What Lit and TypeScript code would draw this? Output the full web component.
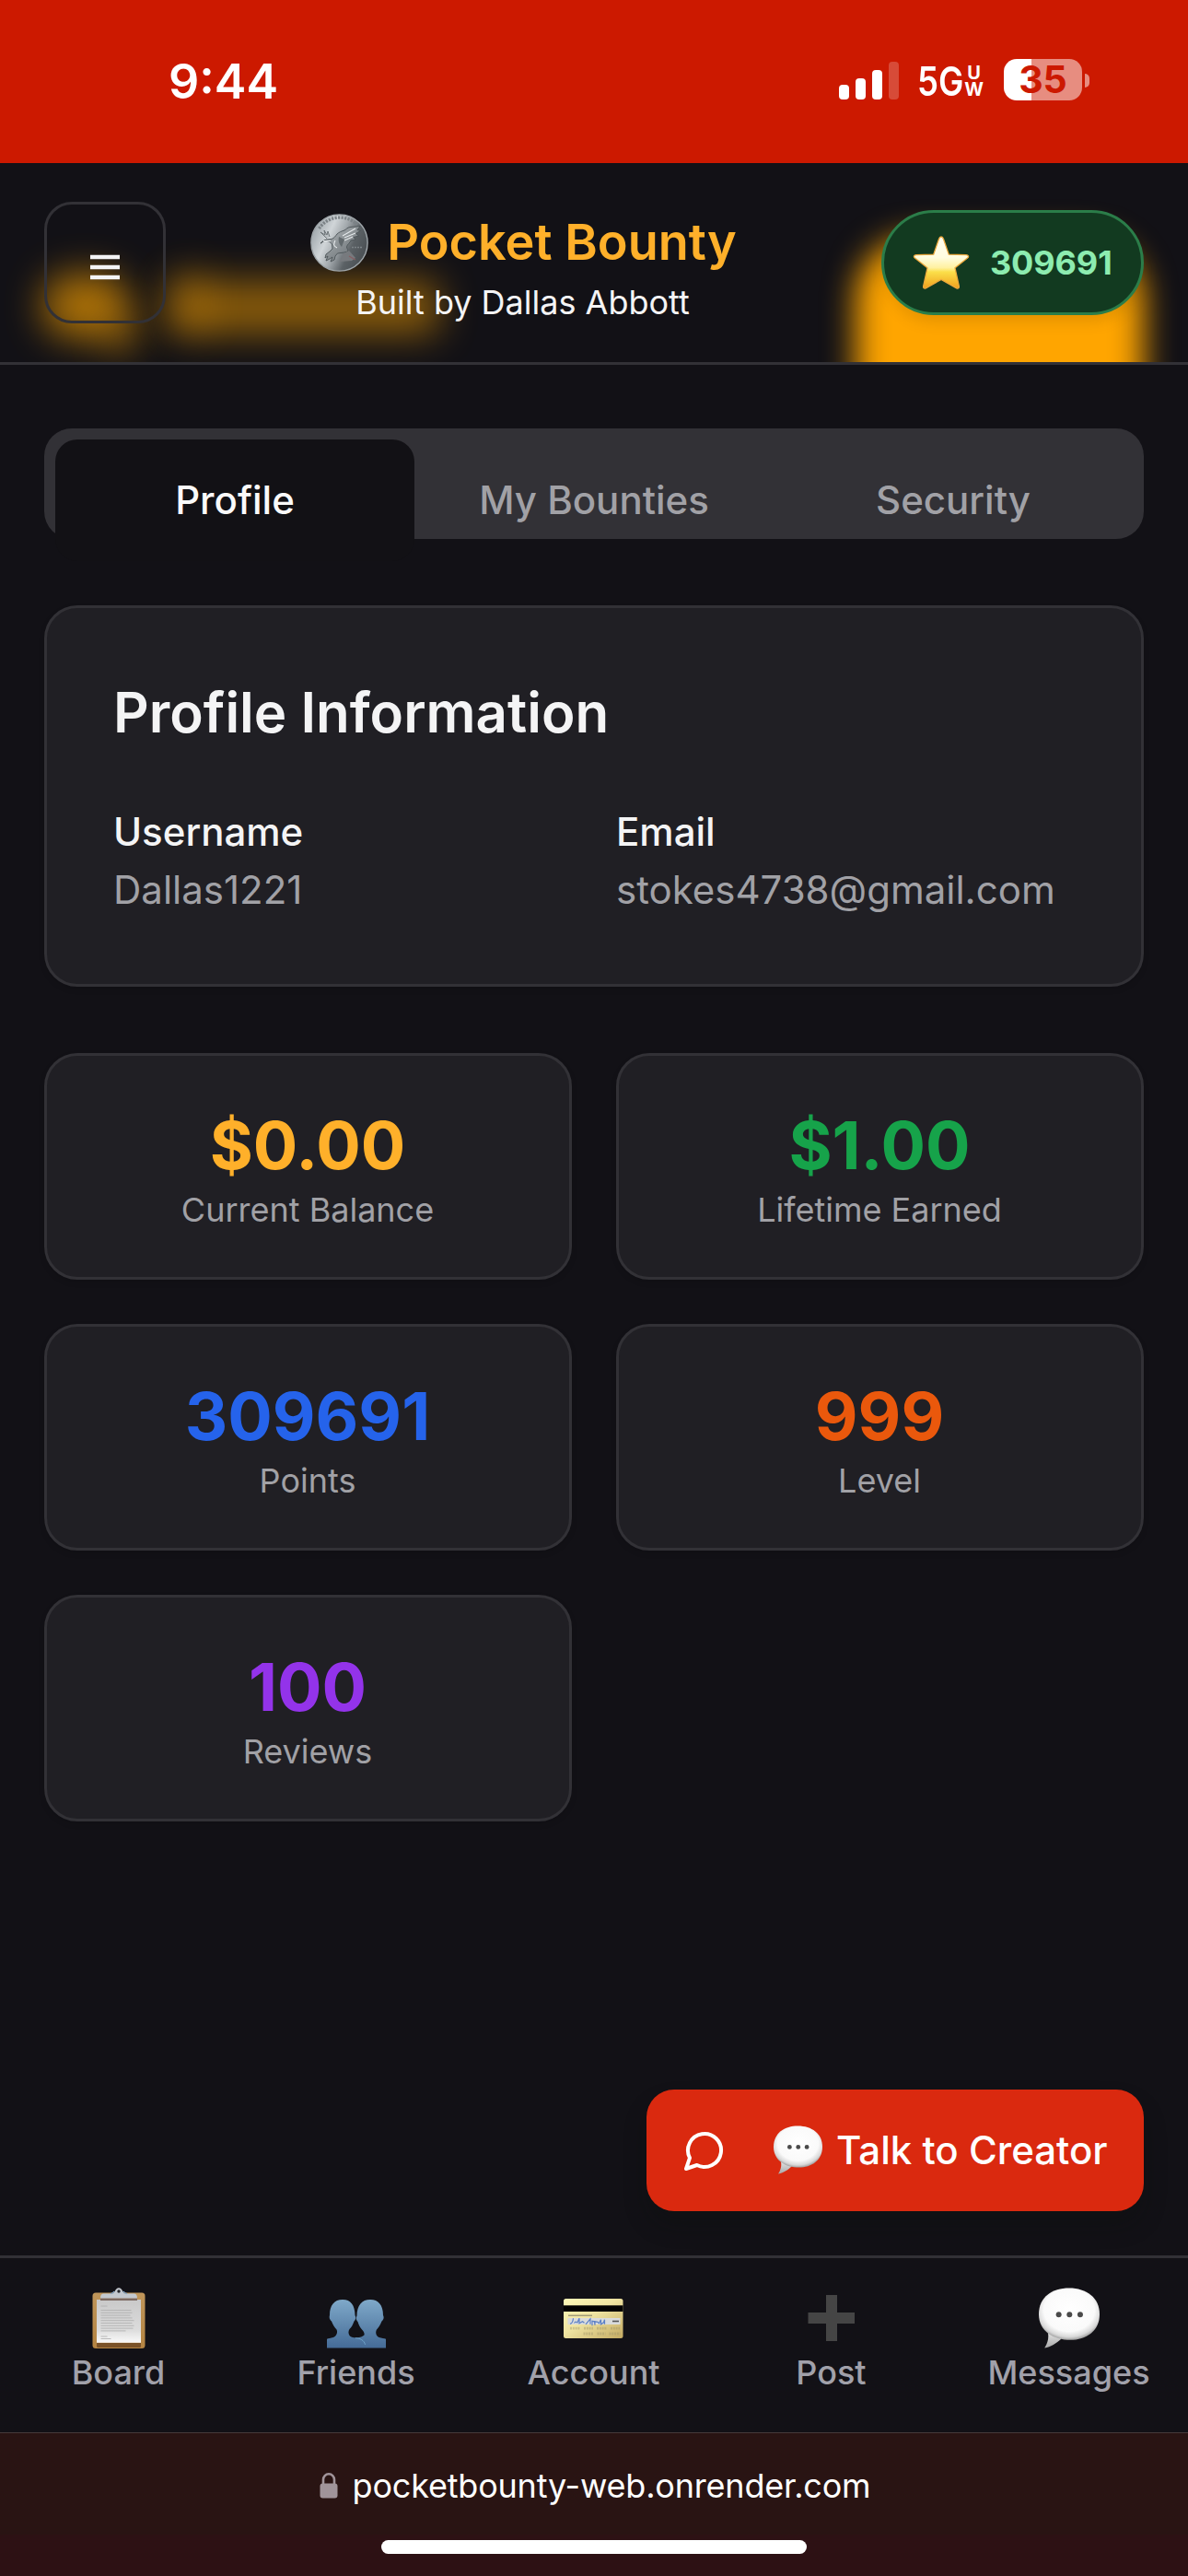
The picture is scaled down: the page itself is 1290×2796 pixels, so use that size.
import { LitElement, html, css, svg } from "lit";
import { customElement, property } from "lit/decorators.js";

interface Stat { value: string; label: string; tone: string; }
interface NavItem { label: string; icon: string; }

const bubble = () => svg`
  <defs>
    <radialGradient id="bub" cx="0.5" cy="0.42" r="0.58">
      <stop offset="0" stop-color="#ffffff"/>
      <stop offset="0.72" stop-color="#fafafa"/>
      <stop offset="0.9" stop-color="#d9d9d9"/>
      <stop offset="1" stop-color="#a2a2a2"/>
    </radialGradient>
    <linearGradient id="tail" x1="0" y1="0" x2="0" y2="1">
      <stop offset="0" stop-color="#e4e4e4"/>
      <stop offset="1" stop-color="#a8a8a8"/>
    </linearGradient>
  </defs>
  <path d="M9.500 47c1.500 6-.5 12-3.500 16.500 8-1.500 13-5.500 18-10z" fill="url(#tail)"/>
  <path d="M32 .5C50 .5 64 10.500 64 28S50 55 33 55 0 46 0 28 14 .5 32 .5z" fill="url(#bub)"/>
  <circle cx="21" cy="28.300" r="2.900" fill="#4a4a4a"/>
  <circle cx="32.300" cy="28.300" r="2.900" fill="#4a4a4a"/>
  <circle cx="43.600" cy="28.300" r="2.900" fill="#4a4a4a"/>`;

@customElement("emoji-icon")
export class EmojiIcon extends LitElement {
  @property() name = "";
  static styles = css`
    :host { display: block; }
    svg { display: block; width: 100%; height: 100%; overflow: visible; }
  `;
  render() {
    switch (this.name) {
      case "board":
        return html`<svg viewBox="0 0 66 66">
          <defs>
            <linearGradient id="wood" x1="0" y1="0" x2="0" y2="1"><stop offset="0" stop-color="#c0965a"/><stop offset="1" stop-color="#b48442"/></linearGradient>
            <linearGradient id="paper" x1="0" y1="0" x2="0" y2="1"><stop offset="0" stop-color="#c9c9c9"/><stop offset=".7" stop-color="#dcdcdc"/><stop offset="1" stop-color="#fafafa"/></linearGradient>
          </defs>
          <rect x="4.500" y="5.500" width="57" height="60.500" rx="3.500" fill="url(#wood)"/>
          <path d="M9 60h48v3.500q0 1.500-1.500 1.500h-45Q9 65 9 63.500z" fill="#7a5228"/>
          <rect x="9" y="13" width="48" height="46.800" fill="url(#paper)"/>
          <path d="M13.500 20h7M13.500 24.500h33M13.500 27.300h34M13.500 30.100h32M13.500 32.900h34M13.500 35.700h36M13.500 38.500h34M13.500 41.300h36M13.500 44.100h35M13.500 46.900h27M13.500 53h7M13.500 55.500h11" stroke="#b2b2b2" stroke-width=".9"/>
          <rect x="13" y="11.300" width="40" height="2.700" fill="#7d6a62"/>
          <path d="M13 11.500c0-3.500 1.300-5 3.500-5h9.500c3-.5 3-6.300 7-6.300s4 5.800 7 6.300h9.500c2.200 0 3.500 1.500 3.500 5z" fill="#c3c8cf"/>
          <path d="M24 6.600q3-.5 4-2.600M42 6.600q-3-.5-4-2.600" fill="none" stroke="#86a9cc" stroke-width="1.300"/>
          <circle cx="33" cy="4" r="1.700" fill="#23252b"/>
        </svg>`;
      case "friends":
        return html`<svg viewBox="0 0 66 66">
          <defs><linearGradient id="ppl" gradientUnits="userSpaceOnUse" x1="0" y1="13" x2="0" y2="66"><stop offset="0" stop-color="#7fa9c9"/><stop offset="1" stop-color="#446a96"/></linearGradient></defs>
          <path d="M18 13c9 0 13.300 6 13.500 17 1.500 3 .5 5-1 6.500-1.500 4-3 7-5 8.500-2 3-1 7 2 8.500 2 .7 4 .8 5.500 1 4-.5 7-1.500 8.500-3 .5-2-.5-4-2.500-6-2-2-3.500-5-4.500-8.500-1.500-1.500-2.500-3.500-1-6.500C33.700 19 39 13 48 13s14 6 14 17c1.500 3 0 5-1.500 6.500-1.500 4-3.500 7-5.500 9-1.500 3-1 7 2.500 8.500 3 .8 5.500 1 7.500 1.800V65.500H1V55.800c1.500-.8 4-1 7-1.800 3.500-1.500 5-5.500 3.500-8.500-2-2-4-5-5.500-9C4.500 35 3 33 4 30 4 19 9 13 18 13z" fill="url(#ppl)"/>
          <path d="M32 54.800c5 0 9.500 2.500 10.500 7" fill="none" stroke="#6fa3c8" stroke-width="1"/>
        </svg>`;
      case "account":
        return html`<svg viewBox="0 0 66 66">
          <defs><linearGradient id="cc" x1="0" y1="0" x2="1" y2="1"><stop offset="0" stop-color="#fdf8b8"/><stop offset=".45" stop-color="#efe4a2"/><stop offset="1" stop-color="#c4aa62"/></linearGradient></defs>
          <rect x="0" y="12" width="64.500" height="43" rx="2.500" fill="url(#cc)"/>
          <rect x="0" y="19.300" width="64.500" height="6.700" fill="#020202"/>
          <rect x="4.500" y="33" width="57" height="7" fill="#d9dbdc"/>
          <path d="M5 30.300h26" stroke="#a29c78" stroke-width="1.500"/>
          <path d="M7 39.300c3-.5 3.500-6 3.500-6m1 5.200c2-3 3 0 3.500-.7l2-4.500v5.500l3.500-2 2 1.500m1.500 1.500l5-6v6m2 1.500v-5l2.500.5.5 4v-4l3 .5 1.500 1.500 2-4v5l3-2 1-3v5" fill="none" stroke="#5c80c6" stroke-width="1.200"/>
          <path d="M53 36.500h7" stroke="#555" stroke-width="1.600"/>
          <path d="M7 44.200h11m4 0h10m4 0h11m4 0h10M21.500 50h11m4 0h9m4 0h12" stroke="#9a9066" stroke-width="2.800" stroke-dasharray="2 .8" opacity=".4"/>
        </svg>`;
      case "post":
        return html`<svg viewBox="0 0 66 66"><path d="M27 8h12v19h19v12H39v19H27V39H7.500V27H27z" fill="#454545"/></svg>`;
      case "star":
        return html`<svg viewBox="0 0 60 58">
          <defs>
            <linearGradient id="st" x1="0" y1="0" x2="0" y2="1"><stop offset="0" stop-color="#fffdf0"/><stop offset=".4" stop-color="#fffce0"/><stop offset=".6" stop-color="#fff1a0"/><stop offset=".68" stop-color="#fbdf4a"/><stop offset="1" stop-color="#f0a01c"/></linearGradient>
          </defs>
          <path d="M30 1c1.200 0 2 1 2.500 2.500l5.800 16.700 18.700.5c2.800.2 3.400 2 1.300 3.600L45 34.800l4.300 19.700c.4 2.300-.9 3.200-2.900 2.100L30 47.500l-16.400 9.100c-2 1.100-3.300.2-2.900-2.100L15 34.800 1.700 24.300c-2.100-1.600-1.500-3.400 1.300-3.600l18.700-.5 5.800-16.700C28 2 28.800 1 30 1z" fill="url(#st)" stroke="#eda83c" stroke-width="1.300"/>
        </svg>`;
      default:
        return html`<svg viewBox="0 0 64 64">${bubble()}</svg>`;
    }
  }
}

@customElement("coin-logo")
export class CoinLogo extends LitElement {
  static styles = css`
    :host { display: block; width: 63px; height: 63px; }
    svg { display: block; width: 63px; height: 63px; }
  `;
  render() {
    return html`<svg viewBox="0 0 63 63">
      <defs>
        <linearGradient id="c" x1="0" y1=".25" x2="1" y2=".7"><stop offset="0" stop-color="#9aa2a7"/><stop offset=".3" stop-color="#d0d5d8"/><stop offset=".5" stop-color="#a2a8ac"/><stop offset=".72" stop-color="#5b6165"/><stop offset="1" stop-color="#484d51"/></linearGradient>
        <linearGradient id="e" x1="0" y1="0" x2="1" y2="1"><stop offset="0" stop-color="#b4babd"/><stop offset="1" stop-color="#62686c"/></linearGradient>
      </defs>
      <circle cx="31.500" cy="31.500" r="30.600" fill="url(#c)" stroke="#9fa6aa" stroke-width="1.400"/>
      <path d="M9.500 16A27 27 0 0 1 51 12" fill="none" stroke="#7b8286" stroke-width="3.400" stroke-dasharray="2.200 1.300"/>
      <path d="M11 32c2-2 4-3.500 7-4l5-.5c3-1 4-3 6-5.500 2-2 5-3 8-4 2-1 3-3 6-3.500l11-1-3 4 3.500 1-5 3 3 2.500-5.500 1.500 2 2.500-5 1c-1 3-4 4-4.500 7 0 2 2 3 1 5l-4 1-7 1-2.500 3-1 4-4 2 2-5-3 2-4 2 2-5-3 2 1-4 4-3 3-3-.5-5-3-3-5-1-4 3z" fill="url(#e)" stroke="#4b5256" stroke-width=".9"/>
      <path d="M18 27l-7-7 5 3-1-5 3 5 1-4 2 6" fill="#b8bec1" stroke="#5c6367" stroke-width=".8"/>
      <path d="M35 24l14-8M37 26l12-5M37 29l9-4M14 29.500l8 0M27 29c-2 4-2 6 2 8" fill="none" stroke="#e6eaec" stroke-width="1.100"/>
      <path d="M31 25c-1 4 0 8 3 11l3-8z" fill="#585f63" opacity=".8"/>
      <path d="M36 43l6-3 7 8-4 3-13 1z" fill="#777a7e"/>
      <path d="M42 46l7 4" stroke="#865d62" stroke-width="1.200"/>
      <path d="M45 36.500h12" stroke="#7c8286" stroke-width="1.600" stroke-dasharray="2 1"/>
    </svg>`;
  }
}

@customElement("status-bar")
export class StatusBar extends LitElement {
  static styles = css`
    :host { display: flex; justify-content: space-between; align-items: flex-start; height: 177px; box-sizing: border-box; padding: 57px 107px 0 183px; background: #cc1900; color: #fff; }
    .time { font-size: 52px; line-height: 64px; font-weight: 600; letter-spacing: 0; }
    .right { display: flex; align-items: center; height: 60px; }
    .bars { display: flex; align-items: flex-end; gap: 7px; height: 41px; margin-right: 1px; }
    .bar { width: 11px; border-radius: 4px; background: #fff; }
    .b1 { height: 16px; } .b2 { height: 23px; } .b3 { height: 32px; } .b4 { height: 41px; opacity: .22; }
    .net { margin-left: 19px; font-size: 44px; line-height: 62px; font-weight: 600; transform: scaleX(.83); transform-origin: left; width: 52px; padding-top: 2px; }
    .uw { display: flex; flex-direction: column; width: 19px; align-items: center; font-size: 20px; line-height: 18.500px; font-weight: 700; margin-right: 23px; padding-top: 2px; }
    .batt { display: flex; align-items: center; justify-content: center; width: 85px; height: 45px; margin-top: -2px; border-radius: 14px; background: linear-gradient(90deg, #fff 30px, #e78d80 30px); font-size: 41px; font-weight: 700; color: #cc1900; line-height: 45px; }
    .cap { width: 5px; height: 15px; margin-left: 3px; border-radius: 0 5px 5px 0; background: #e78d80; }
  `;
  render() {
    return html`<div class="time">9:44</div>
      <div class="right">
        <div class="bars"><div class="bar b1"></div><div class="bar b2"></div><div class="bar b3"></div><div class="bar b4"></div></div>
        <div class="net">5G</div><div class="uw"><span>U</span><span>W</span></div>
        <div class="batt">35</div><div class="cap"></div>
      </div>`;
  }
}

@customElement("app-header")
export class AppHeader extends LitElement {
  static styles = css`
    :host { display: flex; position: relative; overflow: hidden; justify-content: space-between; align-items: flex-start; height: 219px; box-sizing: border-box; padding: 42px 48px 0; border-bottom: 3px solid #323136; }
    .glow { position: absolute; filter: blur(20px); background: #ffa500; }
    .g1 { left: 929px; top: 80px; width: 313px; height: 260px; border-radius: 68px; filter: blur(17px); }
    .g2 { left: 46px; top: 120px; width: 94px; height: 70px; opacity: .64; border-radius: 34px; }
    .g3 { left: 184px; top: 128px; width: 292px; height: 58px; opacity: .5; border-radius: 10px; }
    .g4 { left: 116px; top: 162px; width: 32px; height: 46px; opacity: .38; }
    .g5 { left: 184px; top: 118px; width: 42px; height: 64px; opacity: .22; }
    .menu { display: flex; align-items: center; justify-content: center; position: relative; width: 132px; height: 132px; box-sizing: border-box; padding-top: 9px; border: 3px solid #323136; border-radius: 30px; }
    .brand { position: relative; display: flex; flex-direction: column; align-items: center; margin-top: 13px; }
    .name { display: flex; align-items: center; gap: 20px; height: 63px; font-size: 54px; line-height: 61px; font-weight: 600; color: #ffb02a; }
    .name span { padding-bottom: 2px; }
    .by { font-size: 36px; line-height: 48px; color: #f4f4f5; margin-top: 9px; padding-right: 2px; }
    .points { position: relative; display: flex; align-items: center; gap: 23px; width: 285px; height: 114px; box-sizing: border-box; margin-top: 9px; padding: 0 0 1px 32px; border: 3px solid #2b7d49; border-radius: 57px; background: #123a20; color: #8decb0; font-size: 36px; font-weight: 700; letter-spacing: -0.100px; box-shadow: 0 12px 18px -6px rgba(0,0,0,.12); }
    .star { width: 60px; height: 58px; }
  `;
  render() {
    return html`<div class="glow g1"></div><div class="glow g2"></div><div class="glow g3"></div><div class="glow g4"></div><div class="glow g5"></div>
      <div class="menu"><svg width="32" height="28" viewBox="0 0 32 28"><path d="M0 3h32M0 14h32M0 25h32" stroke="#f4f4f5" stroke-width="4.600"/></svg></div>
      <div class="brand"><div class="name"><coin-logo></coin-logo><span>Pocket Bounty</span></div><div class="by">Built by Dallas Abbott</div></div>
      <div class="points"><emoji-icon class="star" name="star"></emoji-icon><span>309691</span></div>`;
  }
}

@customElement("app-root")
export class AppRoot extends LitElement {
  private stats: Stat[] = [
    { value: "$0.00", label: "Current Balance", tone: "amber" },
    { value: "$1.00", label: "Lifetime Earned", tone: "green" },
    { value: "309691", label: "Points", tone: "blue" },
    { value: "999", label: "Level", tone: "orange" },
    { value: "100", label: "Reviews", tone: "purple" },
  ];
  private nav: NavItem[] = [
    { label: "Board", icon: "board" },
    { label: "Friends", icon: "friends" },
    { label: "Account", icon: "account" },
    { label: "Post", icon: "post" },
    { label: "Messages", icon: "messages" },
  ];
  static styles = css`
    :host { display: flex; flex-direction: column; width: 1290px; height: 2796px; overflow: hidden; background: #121116; color: #f4f4f5; font-family: Inter, "Liberation Sans", sans-serif; }
    .main { flex: 1; display: flex; flex-direction: column; padding: 69px 48px 0; }
    .tabs { display: grid; grid-template-columns: repeat(3, 390px); height: 120px; box-sizing: border-box; padding: 12px; border-radius: 30px; background: #323136; font-size: 42px; font-weight: 500; color: #a1a1a6; }
    .tab { display: flex; align-items: center; justify-content: center; height: 132px; box-sizing: border-box; padding-bottom: 1px; border-radius: 24px; }
    .tab.active { background: #121115; color: #fafafa; }
    .card { border: 3px solid #323136; border-radius: 36px; background: #201f24; box-sizing: border-box; box-shadow: 0 3px 6px rgba(0,0,0,.12); }
    .profile { height: 414px; margin-top: 72px; padding: 71px 72px; }
    .title { font-size: 60px; line-height: 84px; font-weight: 600; }
    .fields { display: grid; grid-template-columns: 498px 498px; column-gap: 48px; margin-top: 58px; font-size: 42px; line-height: 60px; }
    .key { font-weight: 500; margin-bottom: 3px; }
    .val { color: #a1a1a6; }
    .stats { display: grid; grid-template-columns: 1fr 1fr; gap: 48px; margin-top: 72px; }
    .stat { height: 246px; padding-top: 49px; padding-right: 1px; text-align: center; }
    .num { font-size: 72px; line-height: 96px; font-weight: 700; }
    .lab { font-size: 36px; line-height: 48px; color: #a1a1a6; margin-top: -2px; }
    .amber { color: #ffb02a; } .green { color: #16a34a; } .blue { color: #2563eb; } .orange { color: #ea580c; } .purple { color: #9333ea; }
    .talk { display: flex; align-items: center; align-self: flex-end; width: 540px; height: 132px; box-sizing: border-box; margin: auto 0 48px; padding: 0 0 1px 39px; border-radius: 30px; background: #da290f; color: #fff; font-size: 42px; font-weight: 500; box-shadow: 0 16px 24px rgba(10,16,10,.25); }
    .chat { margin-right: 51px; }
    .bub { width: 53px; height: 53px; margin-right: 15px; }
    .nav { display: grid; grid-template-columns: repeat(5, 258px); height: 192px; box-sizing: border-box; border-top: 3px solid #323136; padding-top: 32px; }
    .item { display: flex; flex-direction: column; align-items: center; font-size: 36px; line-height: 48px; font-weight: 500; color: #a1a1aa; padding-right: 1px; }
    .ico { width: 66px; height: 66px; margin-bottom: 2px; }
    .url { display: flex; flex-direction: column; align-items: center; height: 156px; box-sizing: border-box; border-top: 1px solid #463a3a; padding-top: 34px; background: linear-gradient(#291413 0 110px, #2d1114 110px); color: #fff; }
    .addr { display: flex; align-items: center; gap: 16px; height: 46px; font-size: 36px; letter-spacing: -0.200px; padding-left: 2px; }
    .home { width: 462px; height: 15px; border-radius: 8px; background: #fff; margin-top: 36px; }
  `;
  render() {
    return html`
      <status-bar></status-bar>
      <app-header></app-header>
      <div class="main">
        <div class="tabs"><div class="tab active">Profile</div><div class="tab">My Bounties</div><div class="tab">Security</div></div>
        <div class="card profile">
          <div class="title">Profile Information</div>
          <div class="fields">
            <div><div class="key">Username</div><div class="val">Dallas1221</div></div>
            <div><div class="key">Email</div><div class="val">stokes4738@gmail.com</div></div>
          </div>
        </div>
        <div class="stats">${this.stats.map((s) => html`<div class="card stat"><div class="num ${s.tone}">${s.value}</div><div class="lab">${s.label}</div></div>`)}</div>
        <div class="talk">
          <svg class="chat" width="48" height="48" viewBox="0 0 24 24" fill="none" stroke="#fff" stroke-width="2" stroke-linecap="round" stroke-linejoin="round"><path d="M7.900 20A9 9 0 1 0 4 16.100L2 22Z"/></svg>
          <emoji-icon class="bub" name="messages"></emoji-icon><span>Talk to Creator</span>
        </div>
      </div>
      <div class="nav">${this.nav.map((n) => html`<div class="item"><emoji-icon class="ico" name=${n.icon}></emoji-icon><span>${n.label}</span></div>`)}</div>
      <div class="url">
        <div class="addr"><svg width="20" height="28" viewBox="0 0 20 28"><path d="M4 13V7.500a6 6.200 0 0 1 12 0V13" fill="none" stroke="#a0949a" stroke-width="2.600"/><rect x=".5" y="11.500" width="19" height="16" rx="3" fill="#a0949a"/></svg><span>pocketbounty-web.onrender.com</span></div>
        <div class="home"></div>
      </div>`;
  }
}
